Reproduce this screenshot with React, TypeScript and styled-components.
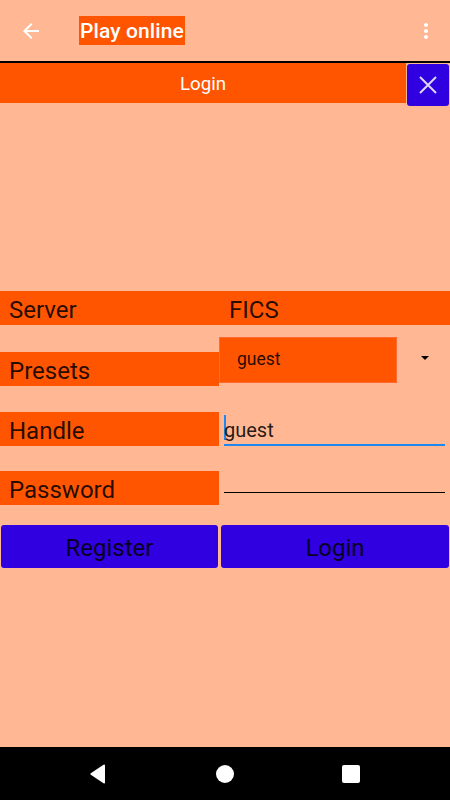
import React from "react";
import styled, { createGlobalStyle } from "styled-components";

const PEACH = "#FFB794";
const ORANGE = "#FF5500";
const BLUE = "#3000E0";
const INK = "rgba(0,0,0,0.87)";

const Global = createGlobalStyle`
  html, body { margin: 0; padding: 0; }
  body {
    background: ${PEACH};
    font-family: Roboto, "Noto Sans", "Liberation Sans", sans-serif;
  }
  #root { height: 800px; }
`;

const Screen = styled.div`
  width: 450px;
  height: 800px;
  display: flex;
  flex-direction: column;
  background: ${PEACH};
  overflow: hidden;
`;

const AppBar = styled.header`
  height: 61px;
  flex: none;
  display: flex;
  align-items: center;
  border-bottom: 2px solid #000;
  padding: 0 12px 0 19px;
  box-sizing: content-box;
`;

const IconBox = styled.div`
  width: 24px;
  height: 24px;
  display: flex;
  flex: none;
`;

const Title = styled.h1`
  margin: 0 0 0 36px;
  font-size: 21px;
  font-weight: 500;
  color: #fff;
  background: ${ORANGE};
  line-height: 27px;
  height: 29px;
  padding: 2px 1px 0;
  box-sizing: border-box;
  letter-spacing: 0.1px;
`;

const Grow = styled.div`
  flex: 1;
`;

const Content = styled.main`
  flex: 1;
  display: flex;
  flex-direction: column;
`;

const LoginHeader = styled.div`
  display: flex;
  align-items: flex-start;
  height: 43px;
`;

const HeaderBar = styled.div`
  width: 406px;
  height: 40px;
  background: ${ORANGE};
  color: #fff;
  font-size: 18.7px;
  display: flex;
  align-items: center;
  justify-content: center;
  padding-top: 2px;
  box-sizing: border-box;
`;

const CloseButton = styled.button`
  margin: 1px 1px 0 1px;
  width: 42px;
  height: 42px;
  background: ${BLUE};
  border: none;
  border-radius: 3px;
  padding: 0;
  display: flex;
  align-items: center;
  justify-content: center;
`;

const Form = styled.div`
  margin-top: 185px;
  display: flex;
  flex-direction: column;
`;

const ServerRow = styled.div`
  height: 34px;
  background: ${ORANGE};
  display: flex;
  align-items: center;
  font-size: 24px;
  color: ${INK};
  padding-top: 3px;
  box-sizing: border-box;
`;

const ServerLabel = styled.div`
  width: 229px;
  padding-left: 9px;
  box-sizing: border-box;
`;

const ServerValue = styled.div``;

const Row = styled.div<{ $top: number; $height: number }>`
  margin-top: ${(p) => p.$top}px;
  height: ${(p) => p.$height}px;
  display: flex;
  align-items: flex-start;
`;

const Label = styled.div<{ $offset?: number }>`
  width: 219px;
  flex: none;
  height: 34px;
  margin-top: ${(p) => p.$offset ?? 0}px;
  background: ${ORANGE};
  color: ${INK};
  font-size: 24px;
  line-height: 34px;
  padding: 2px 0 0 9px;
  box-sizing: border-box;
  overflow: hidden;
`;

const Spinner = styled.div`
  flex: 1;
  display: flex;
  align-items: flex-start;
`;

const SpinnerValue = styled.div`
  width: 178px;
  height: 46px;
  background: ${ORANGE};
  box-shadow: inset 0 0 0 1px #ff6a30;
  color: ${INK};
  font-size: 17.5px;
  line-height: 44px;
  padding-left: 18px;
  box-sizing: border-box;
`;

const Arrow = styled.div`
  margin: 19px 0 0 24px;
  width: 0;
  height: 0;
  border-left: 4px solid transparent;
  border-right: 4px solid transparent;
  border-top: 4px solid #000;
`;

const Field = styled.div<{ $height: number; $focus?: boolean }>`
  margin: 0 5px;
  flex: 1;
  height: ${(p) => p.$height}px;
  border-bottom: ${(p) => (p.$focus ? "2px solid #1E88F0" : "1px solid #000")};
  font-size: 20px;
  color: ${INK};
  display: flex;
  align-items: flex-start;
  padding-top: 3px;
  box-sizing: border-box;
`;

const Caret = styled.span`
  width: 2px;
  height: 25px;
  background: #1E88F0;
  margin-right: -2px;
  flex: none;
`;

const FieldText = styled.span`
  line-height: 25px;
  margin-top: 3px;
`;

const Buttons = styled.div`
  margin-top: 20px;
  display: grid;
  grid-template-columns: 219px 1fr;
  height: 43px;
`;

const ActionButton = styled.button<{ $left: number }>`
  margin: 0 1px 0 ${(p) => p.$left}px;
  height: 43px;
  background: ${BLUE};
  border: none;
  border-radius: 3px;
  color: ${INK};
  font-family: Roboto, "Noto Sans", "Liberation Sans", sans-serif;
  font-size: 24px;
  padding: 2px 0 0;
`;

const NavBar = styled.nav`
  height: 53px;
  flex: none;
  background: #000;
  display: flex;
  align-items: center;
  gap: 102px;
  padding-left: 87px;
`;

const NavIcon = styled.svg`
  width: 24px;
  height: 24px;
  display: block;
`;

export default function App() {
  return (
    <>
      <Global />
      <Screen>
        <AppBar>
          <IconBox>
            <svg width="24" height="24" viewBox="0 0 24 24">
              <path fill="#fff" d="M20 11H7.83l5.59-5.59L12 4l-8 8 8 8 1.41-1.41L7.83 13H20v-2z" />
            </svg>
          </IconBox>
          <Title>Play online</Title>
          <Grow />
          <IconBox>
            <svg width="24" height="24" viewBox="0 0 24 24">
              <path fill="#fff" d="M12 8c1.1 0 2-.9 2-2s-.9-2-2-2-2 .9-2 2 .9 2 2 2zm0 2c-1.1 0-2 .9-2 2s.9 2 2 2 2-.9 2-2-.9-2-2-2zm0 6c-1.1 0-2 .9-2 2s.9 2 2 2 2-.9 2-2-.9-2-2-2z" />
            </svg>
          </IconBox>
        </AppBar>
        <Content>
          <LoginHeader>
            <HeaderBar>Login</HeaderBar>
            <CloseButton aria-label="close">
              <svg width="20" height="20" viewBox="0 0 20 20">
                <path d="M2 2L18 18M18 2L2 18" stroke="#dcd6f7" strokeWidth="2" />
              </svg>
            </CloseButton>
          </LoginHeader>
          <Form>
            <ServerRow>
              <ServerLabel>Server</ServerLabel>
              <ServerValue>FICS</ServerValue>
            </ServerRow>
            <Row $top={12} $height={49}>
              <Label $offset={15}>Presets</Label>
              <Spinner>
                <SpinnerValue>guest</SpinnerValue>
                <Arrow />
              </Spinner>
            </Row>
            <Row $top={26} $height={34}>
              <Label>Handle</Label>
              <Field $height={34} $focus>
                <Caret />
                <FieldText>guest</FieldText>
              </Field>
            </Row>
            <Row $top={25} $height={34}>
              <Label>Password</Label>
              <Field $height={22} />
            </Row>
            <Buttons>
              <ActionButton $left={1}>Register</ActionButton>
              <ActionButton $left={2}>Login</ActionButton>
            </Buttons>
          </Form>
        </Content>
        <NavBar>
          <NavIcon viewBox="0 0 24 24">
            <path fill="#fff" d="M18 3.5v17a1 1 0 0 1-1.5.8L3.8 12.8a1 1 0 0 1 0-1.6L16.5 2.7A1 1 0 0 1 18 3.5z" />
          </NavIcon>
          <NavIcon viewBox="0 0 24 24">
            <circle cx="12" cy="12" r="9" fill="#fff" />
          </NavIcon>
          <NavIcon viewBox="0 0 24 24">
            <rect x="3" y="3" width="18" height="18" rx="2" fill="#fff" />
          </NavIcon>
        </NavBar>
      </Screen>
    </>
  );
}
